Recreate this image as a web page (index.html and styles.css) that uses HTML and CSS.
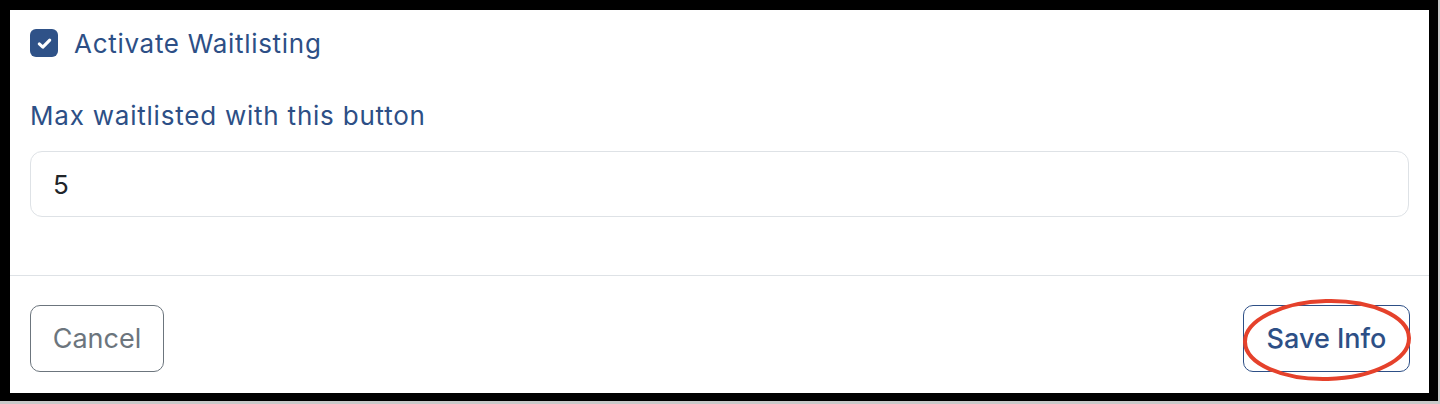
FILE: index.html
```html
<!DOCTYPE html>
<html lang="en">
<head>
    <meta charset="UTF-8">
    <meta name="viewport" content="width=device-width, initial-scale=1.0">
    <title>Waitlist settings</title>
    <link rel="stylesheet" href="styles.css">
</head>
<body>

    <div class="frame">
        <div class="modal">
            <div class="modal-body">
                <label class="check-row">
                    <span class="checkbox">
                        <svg width="19" height="19" viewBox="0 0 16 16">
                            <path d="M3.6 8.4 L6.6 11.1 L12.4 5.1" fill="none" stroke="#fff" stroke-width="2.6" stroke-linecap="round" stroke-linejoin="round"/>
                        </svg>
                    </span>
                    Activate Waitlisting
                </label>

                <label class="field-label" for="maxWaitlisted">Max waitlisted with this button</label>
                <div class="text-input" id="maxWaitlisted">5</div>
            </div>

            <div class="modal-footer">
                <button class="btn btn-cancel">Cancel</button>
                <button class="btn btn-save">
                    Save Info
                    <svg class="circled" width="176" height="90" viewBox="0 0 176 90">
                        <ellipse cx="88" cy="45" rx="82" ry="39" fill="none" stroke="#e5412b" stroke-width="4" transform="rotate(-1.5 88 45)"/>
                    </svg>
                </button>
            </div>
        </div>
    </div>

</body>
</html>
```

FILE: styles.css
```css
body {
    margin: 0;
    background-color: #c9c9c9;
    font-family: Inter, "Noto Sans", "Liberation Sans", sans-serif;
}
.frame {
    width: 1438px;
    height: 401px;
    box-sizing: border-box;
    padding: 10px 9px 8px 10px;
    background-color: #000;
}
.modal {
    height: 100%;
    background-color: #fff;
    display: flex;
    flex-direction: column;
}
.modal-body {
    padding: 19px 20px 0 20px;
    height: 265px;
    box-sizing: border-box;
}
.check-row {
    display: flex;
    align-items: center;
    gap: 16px;
    height: 28px;
    font-size: 26px;
    letter-spacing: 0.7px;
    color: #2d4f86;
}
.checkbox {
    width: 28px;
    height: 28px;
    border-radius: 6px;
    background-color: #2f5288;
    display: flex;
    align-items: center;
    justify-content: center;
}
.field-label {
    display: block;
    margin-top: 41px;
    font-size: 26px;
    line-height: 36px;
    letter-spacing: 0.78px;
    color: #2d4f86;
}
.text-input {
    margin-top: 17px;
    height: 66px;
    box-sizing: border-box;
    border: 1px solid #dee2e6;
    border-radius: 12px;
    padding: 0 22px;
    display: flex;
    align-items: center;
    font-size: 26px;
    color: #212529;
}
.modal-footer {
    border-top: 1px solid #dee2e6;
    padding: 29px 19px 0 20px;
    display: flex;
    justify-content: space-between;
}
.btn {
    height: 67px;
    border-radius: 10px;
    background-color: #fff;
    font-family: inherit;
    font-size: 27px;
    padding: 0;
    white-space: nowrap;
}
.btn-cancel {
    border: 1px solid #6c757d;
    color: #6c757d;
    width: 134px;
}
.btn-save {
    border: 1px solid #2d4f86;
    color: #2d4f86;
    font-weight: 500;
    width: 167px;
    position: relative;
}
.circled {
    position: absolute; /* annotation drawn over the button */
    left: -5px;
    top: -11px;
}
```
